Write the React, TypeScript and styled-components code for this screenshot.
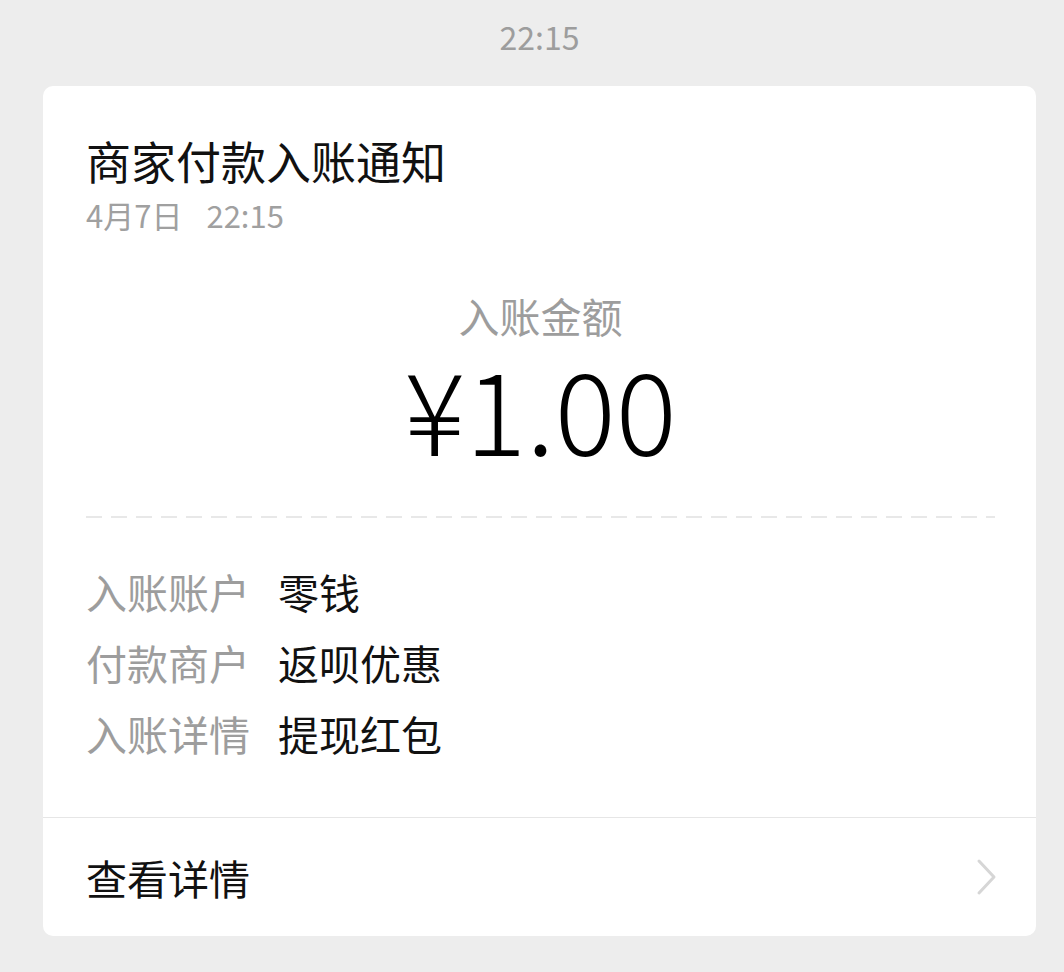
import React from 'react'
import styled, { createGlobalStyle } from 'styled-components'

const GlobalStyle = createGlobalStyle`
    body {
        margin: 0;
        background: #ededed;
        font-family: 'Noto Sans CJK SC', 'Noto Sans', sans-serif;
    }
`

const Page = styled.div`
    min-height: 972px;
    padding: 15px 28px 0 43px;
    box-sizing: border-box;
`

const TimeStamp = styled.div`
    text-align: center;
    font-size: 32px;
    line-height: 42px;
    color: #9d9d9d;
    margin-bottom: 29px;
`

const Card = styled.div`
    background: #fff;
    border-radius: 10px;
    overflow: hidden;
`

const Body = styled.div`
    padding: 47px 41px 49px 43px;
    border-bottom: 1px solid #e6e6e6;
`

const Title = styled.div`
    font-size: 45px;
    line-height: 56px;
    color: #111;
`

const SubTime = styled.div`
    display: flex;
    gap: 24px;
    font-size: 31px;
    line-height: 40px;
    color: #a0a0a0;
    margin-top: 6px;
`

const AmountLabel = styled.div`
    text-align: center;
    font-size: 41px;
    line-height: 50px;
    color: #9d9d9d;
    margin-top: 55px;
`

const Amount = styled.div`
    text-align: center;
    font-size: 114px;
    line-height: 124px;
    color: #000;
    margin-top: 5px;
    font-weight: 300;
`

const Dashed = styled.div`
    height: 2px;
    margin-top: 47px;
    background: repeating-linear-gradient(
        to right,
        #e8e8e8 0,
        #e8e8e8 16px,
        transparent 16px,
        transparent 25px
    );
`

const Rows = styled.div`
    margin-top: 37px;
`

const Row = styled.div`
    display: flex;
    align-items: center;
    height: 71px;
    font-size: 41px;
`

const Label = styled.span`
    width: 192px;
    color: #9d9d9d;
`

const Value = styled.span`
    color: #111;
`

const Footer = styled.div`
    display: flex;
    align-items: center;
    justify-content: space-between;
    height: 118px;
    padding: 0 38px 0 43px;
    font-size: 41px;
    color: #111;
`

const Chevron = () => (
    <svg width="22" height="38" viewBox="0 0 22 38" fill="none">
        <path
            d="M3 3 L18 19 L3 35"
            stroke="#d6d6d6"
            strokeWidth="3"
            strokeLinecap="round"
            strokeLinejoin="round"
        />
    </svg>
)

const details = [
    { label: '入账账户', value: '零钱' },
    { label: '付款商户', value: '返呗优惠' },
    { label: '入账详情', value: '提现红包' },
]

export default function App() {
    return (
        <Page>
            <GlobalStyle />
            <TimeStamp>22:15</TimeStamp>
            <Card>
                <Body>
                    <Title>商家付款入账通知</Title>
                    <SubTime>
                        <span>4月7日</span>
                        <span>22:15</span>
                    </SubTime>
                    <AmountLabel>入账金额</AmountLabel>
                    <Amount>¥1.00</Amount>
                    <Dashed />
                    <Rows>
                        {details.map((d) => (
                            <Row key={d.label}>
                                <Label>{d.label}</Label>
                                <Value>{d.value}</Value>
                            </Row>
                        ))}
                    </Rows>
                </Body>
                <Footer>
                    <span>查看详情</span>
                    <Chevron />
                </Footer>
            </Card>
        </Page>
    )
}
